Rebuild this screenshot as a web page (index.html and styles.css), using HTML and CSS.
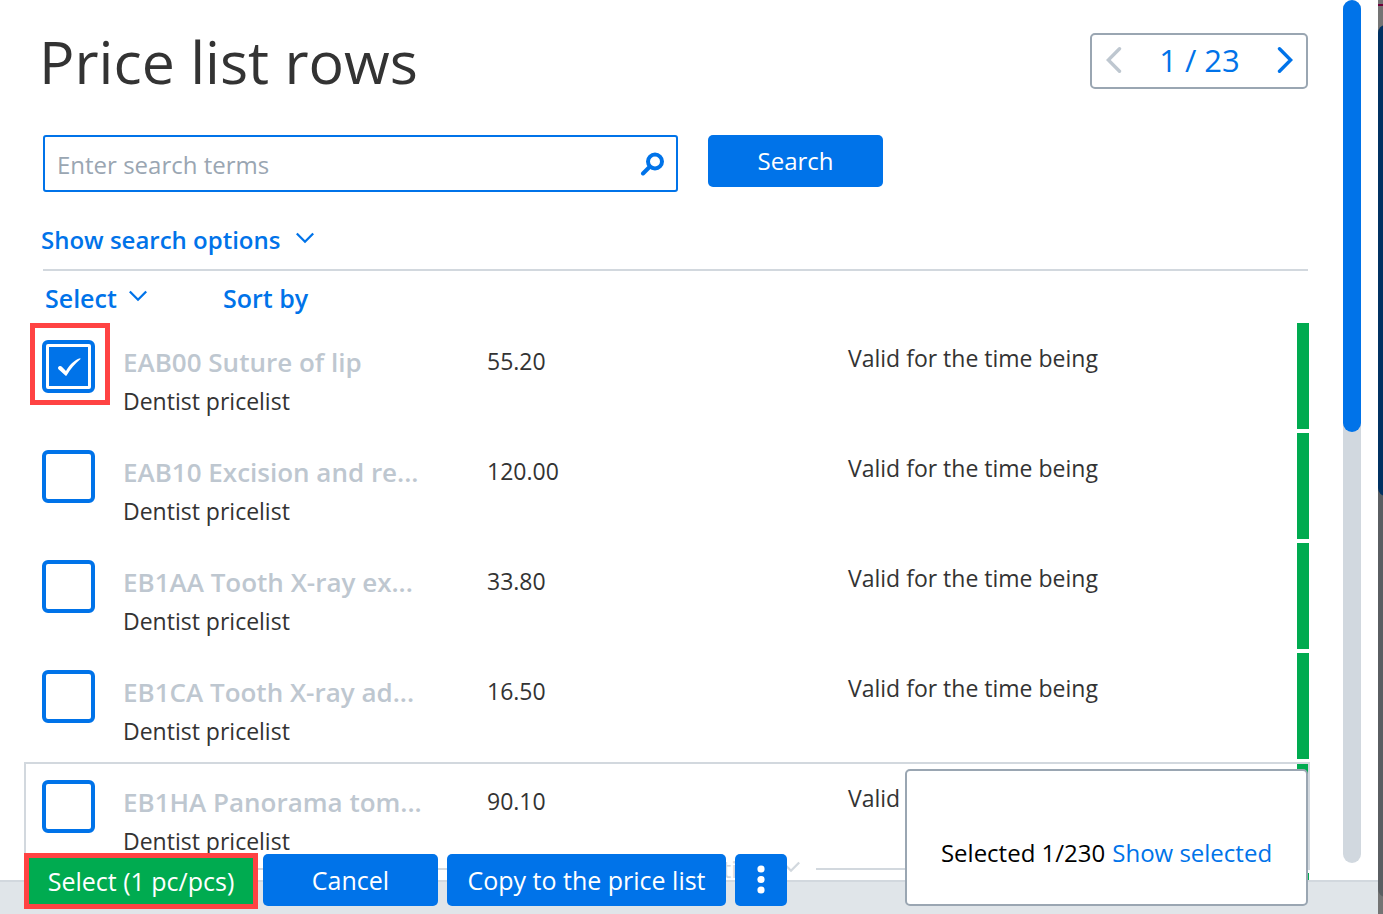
FILE: index.html
```html
<!DOCTYPE html>
<html lang="en">
<head>
<meta charset="utf-8">
<title>Price list rows</title>
<link rel="stylesheet" href="styles.css">
</head>
<body>
<div class="dialog">
  <main class="content">
    <header class="head">
      <h1 class="title">Price list rows</h1>
      <nav class="pager" aria-label="Pages">
        <button class="pager-btn" type="button" aria-label="Previous page" disabled><svg width="16" height="26" viewBox="0 0 16 26"><path d="M13.5 1.8 2.3 13l11.2 11.2"/></svg></button>
        <span class="pager-text">1 / 23</span>
        <button class="pager-btn" type="button" aria-label="Next page"><svg width="16" height="26" viewBox="0 0 16 26"><path d="M2.5 1.8 13.7 13 2.5 24.2"/></svg></button>
      </nav>
    </header>

    <form class="search">
      <div class="field">
        <input class="field-input" type="text" placeholder="Enter search terms" aria-label="Enter search terms">
        <svg class="field-icon" width="24" height="24" viewBox="0 0 24 24"><circle cx="15" cy="9.5" r="7"/><path d="M9.5 15 3 21.500" /></svg>
      </div>
      <button class="btn btn-search" type="button">Search</button>
    </form>

    <button class="link options" type="button">Show search options <svg class="chevron" width="18" height="16" viewBox="0 0 18 16"><path d="M.8 1.500 9 9.700l8.200-8.200"/></svg></button>

    <div class="tools">
      <button class="link tool-select" type="button">Select <svg class="chevron" width="18" height="16" viewBox="0 0 18 16"><path d="M.8 1.500 9 9.700l8.200-8.200"/></svg></button>
      <button class="link" type="button">Sort by</button>
    </div>

    <ul class="rows">
      <li class="row">
        <label class="check marked"><input type="checkbox" checked aria-label="EAB00 Suture of lip"><svg width="24" height="20" viewBox="0 0 24 20"><path d="M1 10.5C2.2 8.6 4 8.8 4.900 9.800L9 14C12 8.500 17 3 23 1.200 23.500 1.100 23.700 1.700 23.300 2.200 18 6.500 13.500 12 9.600 18.500 9.300 19 8.700 19 8.400 18.600L1.200 12Z"/></svg></label>
        <div class="item"><strong class="name">EAB00 Suture of lip</strong><span class="source">Dentist pricelist</span></div>
        <span class="price">55.20</span><span class="valid">Valid for the time being</span><span class="bar"></span>
      </li>
      <li class="row">
        <label class="check"><input type="checkbox" aria-label="EAB10 Excision and re…"></label>
        <div class="item"><strong class="name">EAB10 Excision and re...</strong><span class="source">Dentist pricelist</span></div>
        <span class="price">120.00</span><span class="valid">Valid for the time being</span><span class="bar"></span>
      </li>
      <li class="row">
        <label class="check"><input type="checkbox" aria-label="EB1AA Tooth X-ray ex…"></label>
        <div class="item"><strong class="name">EB1AA Tooth X-ray ex...</strong><span class="source">Dentist pricelist</span></div>
        <span class="price">33.80</span><span class="valid">Valid for the time being</span><span class="bar"></span>
      </li>
      <li class="row">
        <label class="check"><input type="checkbox" aria-label="EB1CA Tooth X-ray ad…"></label>
        <div class="item"><strong class="name">EB1CA Tooth X-ray ad...</strong><span class="source">Dentist pricelist</span></div>
        <span class="price">16.50</span><span class="valid">Valid for the time being</span><span class="bar"></span>
      </li>
      <li class="row row-active">
        <label class="check"><input type="checkbox" aria-label="EB1HA Panorama tom…"></label>
        <div class="item"><strong class="name">EB1HA Panorama tom...</strong><span class="source">Dentist pricelist</span></div>
        <span class="price">90.10</span><span class="valid">Valid for the time being</span><span class="bar"></span>
        <button class="more" type="button">Actions <svg class="chevron" width="18" height="16" viewBox="0 0 18 16"><path d="M.8 1.500 9 9.700l8.200-8.200"/></svg></button>
      </li>
      <li class="row"><span class="bar"></span></li>
    </ul>
  </main>

  <div class="track"><div class="thumb"></div></div>

  <footer class="footer">
    <div class="actions">
      <button class="btn btn-confirm" type="button">Select (1 pc/pcs)</button>
      <button class="btn btn-cancel" type="button">Cancel</button>
      <button class="btn btn-copy" type="button">Copy to the price list</button>
      <button class="btn btn-menu" type="button" aria-label="More"><svg width="8" height="30" viewBox="0 0 8 30"><circle cx="4" cy="4" r="3.600"/><circle cx="4" cy="14.500" r="3.600"/><circle cx="4" cy="25" r="3.600"/></svg></button>
    </div>
  </footer>
  <aside class="summary"><span>Selected 1/230</span> <a href="#selected">Show selected</a></aside>
</div>
<div class="backdrop"><div class="backdrop-line"></div><div class="backdrop-panel"><div class="backdrop-tab"></div></div></div>
</body>
</html>
```

FILE: styles.css
```css
:root {
  --blue: #0073e9;
  --green: #00ab50;
  --red: #ff4343;
  --line: #d2d8de;
  --muted: #9aa6b2;
}

* { box-sizing: border-box; }

body {
  display: flex;
  height: 100vh;
  margin: 0;
  overflow: hidden;
  background: #fff;
  color: #333;
  font: 23px/32px "Open Sans", "Noto Sans", sans-serif;
}

button, input {
  font: inherit;
}

button {
  padding: 0;
  border: 0;
  background: none;
  color: inherit;
}

svg { display: block; flex: none; }

.dialog {
  position: relative;
  display: flex;
  flex: 1;
  align-items: flex-start;
  overflow: hidden;
}

.content {
  flex: 1;
  padding: 20px 34px 0 25px;
}

.head {
  display: flex;
  justify-content: space-between;
  align-items: center;
  padding: 0 1px 0 14px;
}

.title {
  margin: 0;
  font-size: 59px;
  font-weight: 400;
  line-height: 82px;
}

.pager {
  display: flex;
  justify-content: space-between;
  align-items: center;
  width: 218px;
  height: 56px;
  padding: 0 13px 2px 14px;
  border: 2px solid var(--muted);
  border-radius: 5px;
  color: var(--blue);
  font-size: 31px;
}

.pager-btn:disabled { color: #bec7d0; }

.pager-btn path {
  fill: none;
  stroke: currentColor;
  stroke-width: 3.4;
  stroke-linecap: round;
}

.search {
  display: flex;
  align-items: flex-start;
  gap: 30px;
  margin: 33px 0 0 18px;
  font-size: 24px;
}

.field {
  display: grid;
  grid-template-columns: 1fr 24px;
  align-items: center;
  width: 635px;
  height: 57px;
  padding: 0 12px 0 0;
  border: 2px solid var(--blue);
  border-radius: 3px;
}

.field-input {
  width: 100%;
  height: 52px;
  padding: 2px 0 0 12px;
  border: 0;
  outline: 0;
  background: none;
  color: inherit;
}

.field-input::placeholder { color: var(--muted); opacity: 1; }

.field-icon {
  fill: none;
  stroke: var(--blue);
  stroke-width: 4;
  stroke-linecap: round;
}

.btn {
  display: grid;
  place-items: center;
  height: 52px;
  border-radius: 5px;
  background: var(--blue);
  color: #fff;
}

.btn-search { width: 175px; }

.link {
  display: flex;
  align-items: center;
  gap: 12px;
  color: var(--blue);
  font-weight: 600;
}

.chevron {
  fill: none;
  stroke: currentColor;
  stroke-width: 2.3;
}

.options {
  gap: 16px;
  margin: 32px 0 13px 16px;
  font-size: 24px;
}

.tools {
  display: flex;
  align-items: center;
  margin: 0 1px 0 18px;
  padding: 11px 0 9px 2px;
  border-top: 2px solid var(--line);
  font-size: 25px;
}

.tool-select { width: 178px; }

.rows {
  display: grid;
  gap: 4px;
  margin: 0;
  padding: 0;
  list-style: none;
}

.row {
  position: relative;
  display: grid;
  grid-template-columns: 98px 364px 361px 1fr 12px;
  align-items: start;
  min-height: 106px;
}

.row-active {
  outline: 2px solid var(--line);
  outline-offset: -1px;
}

.check {
  position: relative;
  display: grid;
  place-items: center;
  width: 53px;
  height: 53px;
  margin: 17px 0 0 17px;
}

.check > * { grid-area: 1 / 1; }

.check input {
  width: 53px;
  height: 53px;
  margin: 0;
  padding: 3px;
  appearance: none;
  border: 4px solid var(--blue);
  border-radius: 6px;
  background: #fff content-box;
}

.check input:checked { background-color: var(--blue); }

.check svg { z-index: 1; fill: #fff; }

.marked::after {
  content: "";
  position: absolute;
  inset: -17px -15px -12px -12px;
  border: 5px solid var(--red);
}

.item { padding-top: 23px; }

.name, .source { display: block; white-space: nowrap; }

.name {
  color: #bec7d0;
  font-size: 26px;
  font-weight: 600;
}

.source { margin-top: 7px; }

.price { padding-top: 22px; }

.valid { padding-top: 19px; }

.bar {
  grid-column: 5;
  align-self: stretch;
  background: var(--green);
}

.more {
  position: absolute;
  bottom: -16px;
  left: 50%;
  display: flex;
  align-items: center;
  justify-content: flex-end;
  gap: 6px;
  width: 298px;
  padding: 0 16px;
  transform: translateX(-50%);
  background: #fff;
  color: var(--line);
}

.track {
  width: 18px;
  height: calc(100vh - 51px);
  margin-right: 17px;
  border-radius: 9px;
  background: #d1d8df;
}

.thumb {
  height: 50%;
  border-radius: 9px;
  background: var(--blue);
}

.footer {
  position: absolute;
  right: 0;
  bottom: 0;
  left: 0;
  display: flex;
  align-items: flex-end;
  height: 34px;
  padding: 0 24px 5px;
  border-top: 2px solid var(--line);
  background: #e0e5e9;
}

.actions {
  display: flex;
  align-items: flex-start;
  gap: 9px;
  font-size: 25px;
}

.actions .btn { margin-top: 1px; }

.actions .btn-confirm {
  width: 234px;
  height: 56px;
  margin: 0 -4px 0 0;
  border: 5px solid var(--red);
  border-radius: 0;
  background: var(--green);
}

.btn-cancel { width: 175px; }

.btn-copy { width: 279px; }

.btn-menu { width: 52px; }

.btn-menu svg { fill: #fff; }

.summary {
  position: absolute;
  right: 70px;
  bottom: 8px;
  display: flex;
  justify-content: center;
  align-items: flex-end;
  gap: 7px;
  width: 403px;
  height: 137px;
  padding-bottom: 35px;
  border: 2px solid var(--muted);
  border-radius: 5px;
  background: #fff;
  color: #000;
  font-size: 24px;
  font-weight: 500;
  white-space: nowrap;
}

.summary a { color: var(--blue); text-decoration: none; }

.backdrop {
  display: flex;
  flex-direction: column;
  width: 5px;
  padding: 4px 0 17px;
  overflow: hidden;
  background: #747474;
}

.backdrop-line { height: 2px; margin-bottom: 19px; background: #6f0038; }

.backdrop-panel {
  flex: 1;
  width: 20px;
  border-radius: 8px;
  background: #5a5e62;
}

.backdrop-tab {
  height: 54%;
  border-radius: 8px;
  background: #003162;
}
```
